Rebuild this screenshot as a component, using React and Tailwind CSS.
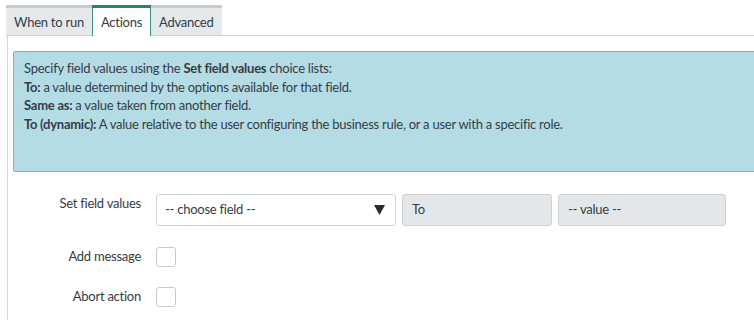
export default function App() {
  return (
    <div className="w-[754px] h-[320px] bg-white overflow-hidden text-[#343d47] text-[13px] tracking-[-0.25px]" style={{ fontFamily: "Lato, 'Open Sans', sans-serif" }}>
      <div className="flex pt-[5px] pl-[6px]">
        <div className="h-[31px] px-[8px] pt-[2px] flex items-center bg-[#e6e9eb] border-t-[3px] border-[#c8cacc] border-b border-b-[#cfd2d4]">When to run</div>
        <div className="h-[31px] px-[8px] pt-[2px] flex items-center bg-white border-t-[3px] border-[#278473] border-x border-x-[#3a8c7e]">Actions</div>
        <div className="h-[31px] px-[8px] pt-[2px] flex items-center bg-[#e6e9eb] border-t-[3px] border-[#c8cacc] border-b border-b-[#cfd2d4]">Advanced</div>
        <div className="flex-1 border-b border-[#cfd2d4]" />
      </div>
      <div className="ml-[7px] border-l border-[#d4d6d8] pt-[15px] pl-[5px] h-[300px]">
        <div className="w-[760px] h-[121px] bg-[#b4dce4] border border-[#5ebdd0] rounded-[2px] pt-[7px] pl-[10px] leading-[18.5px]">
          <div>Specify field values using the <b className="font-bold">Set field values</b> choice lists:</div>
          <div><b className="font-bold">To:</b> a value determined by the options available for that field.</div>
          <div><b className="font-bold">Same as:</b> a value taken from another field.</div>
          <div><b className="font-bold">To (dynamic):</b> A value relative to the user configuring the business rule, or a user with a specific role.</div>
        </div>
        <div className="mt-[22px] flex items-start">
          <div className="w-[128px] text-right pt-[0px]">Set field values</div>
          <div className="ml-[15px] w-[240px] h-[32px] border border-[#cfd2d4] rounded-[3px] flex items-center justify-between pl-[8px] pr-[10px]">
            <span>-- choose field --</span>
            <svg width="11" height="10" viewBox="0 0 11 10"><path d="M0 0 H11 L5.5 10 Z" fill="#2b2b2b" /></svg>
          </div>
          <div className="ml-[6px] w-[150px] h-[32px] bg-[#e4e7ea] border border-[#cfd2d4] rounded-[3px] flex items-center pl-[9px]">To</div>
          <div className="ml-[6px] w-[168px] h-[32px] bg-[#e4e7ea] border border-[#cfd2d4] rounded-[3px] flex items-center pl-[9px]">-- value --</div>
        </div>
        <div className="mt-[21px] flex items-center">
          <div className="w-[128px] text-right">Add message</div>
          <div className="ml-[15px] w-[20px] h-[20px] border border-[#c8cacc] rounded-[3px] bg-white" />
        </div>
        <div className="mt-[20px] flex items-center">
          <div className="w-[128px] text-right">Abort action</div>
          <div className="ml-[15px] w-[20px] h-[20px] border border-[#c8cacc] rounded-[3px] bg-white" />
        </div>
      </div>
    </div>
  );
}
